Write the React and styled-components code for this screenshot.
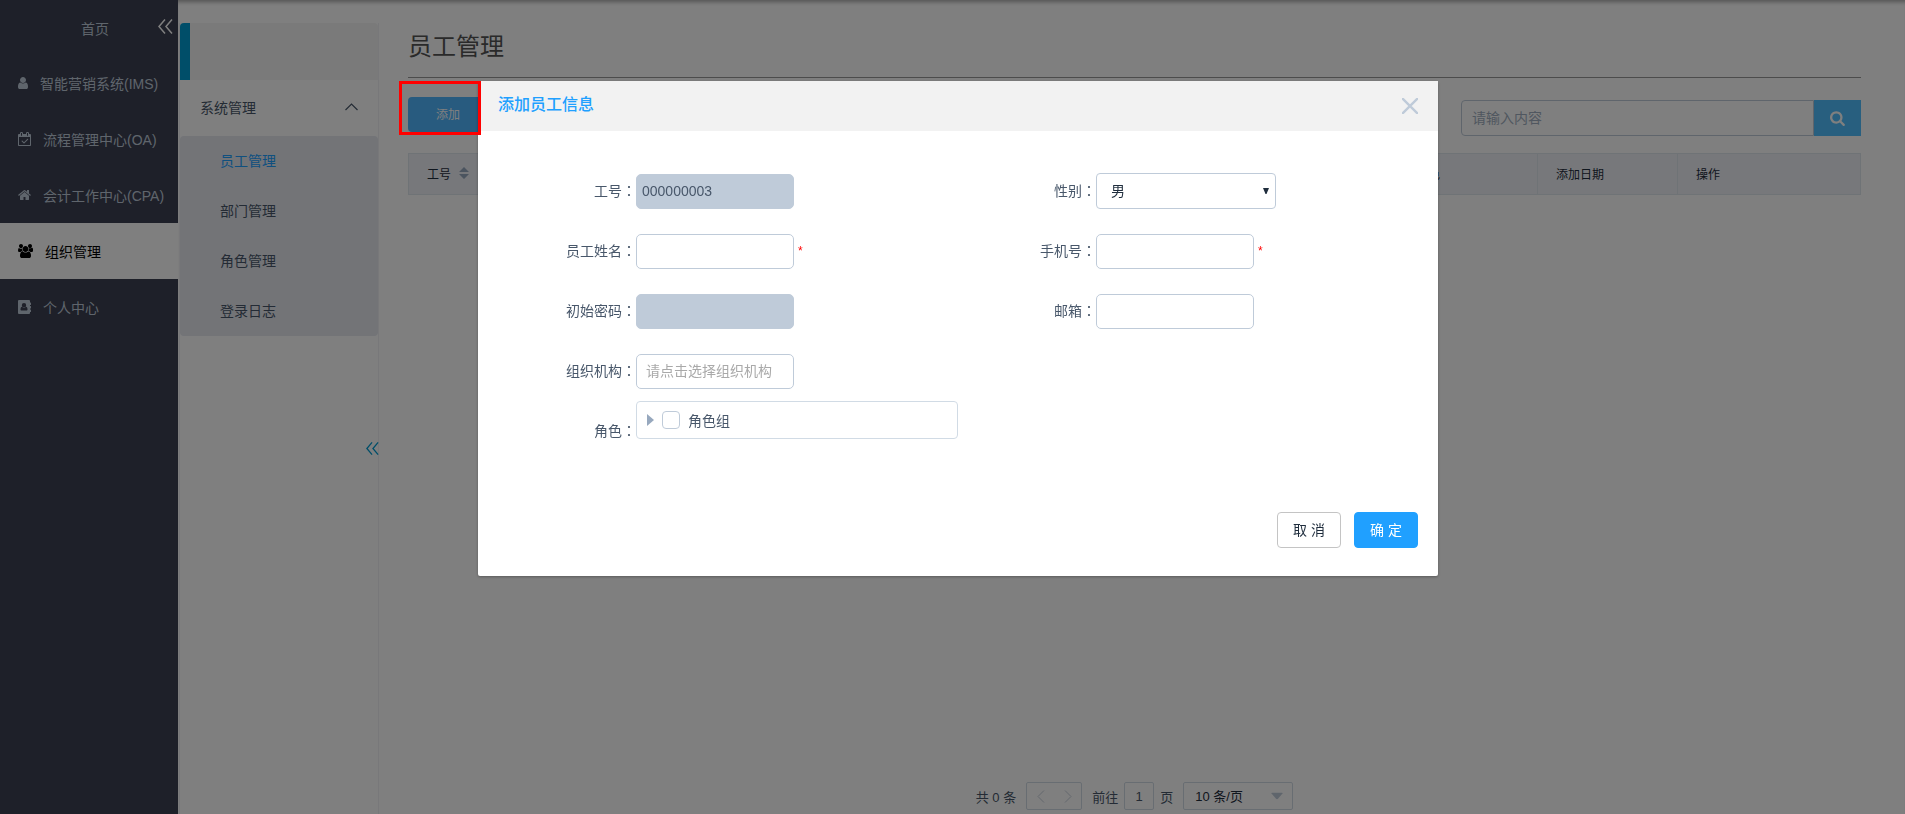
import React, { useState } from 'react';
import styled, { createGlobalStyle } from 'styled-components';


const GlobalStyle = createGlobalStyle`
    * {
        box-sizing: border-box;
    }

    body {
        margin: 0;
        background: #fff;
        color: #48576a;
        font-family: "Liberation Sans", "Noto Sans CJK SC", sans-serif;
        font-size: 14px;
    }

    button, input, select {
        font-family: inherit;
        font-size: 14px;
    }

    a {
        text-decoration: none;
        color: inherit;
    }

    ul {
        list-style: none;
        margin: 0;
        padding: 0;
    }
`

const icons = {
    user: {
        width: 10,
        box: '0 0 1280 1792',
        path: 'M1280 1399q0 109-62.5 187t-150.5 78h-854q-88 0-150.5-78t-62.5-187q0-85 8.5-160.5t31.5-152 58.5-131 94-89 134.5-34.5q131 128 313 128t313-128q76 0 134.5 34.5t94 89 58.5 131 31.5 152 8.5 160.5zm-256-887q0 159-112.5 271.5t-271.5 112.5-271.5-112.5-112.5-271.5 112.5-271.5 271.5-112.5 271.5 112.5 112.5 271.5z'
    },
    calendar: {
        width: 13,
        box: '0 0 1664 1792',
        path: 'M1303 964l-512 512q-10 9-23 9t-23-9l-288-288q-9-10-9-23t9-22l46-46q9-9 22-9t23 9l220 220 444-444q10-9 23-9t22 9l46 46q9 9 9 22t-9 23zm-1175 700h1408v-1024h-1408v1024zm384-1216v-288q0-14-9-23t-23-9h-64q-14 0-23 9t-9 23v288q0 14 9 23t23 9h64q14 0 23-9t9-23zm768 0v-288q0-14-9-23t-23-9h-64q-14 0-23 9t-9 23v288q0 14 9 23t23 9h64q14 0 23-9t9-23zm384-64v1280q0 52-38 90t-90 38h-1408q-52 0-90-38t-38-90v-1280q0-52 38-90t90-38h128v-96q0-66 47-113t113-47h64q66 0 113 47t47 113v96h384v-96q0-66 47-113t113-47h64q66 0 113 47t47 113v96h128q52 0 90 38t38 90z'
    },
    home: {
        width: 13,
        box: '64 0 1664 1792',
        path: 'M1472 992v480q0 26-19 45t-45 19h-384v-384h-256v384h-384q-26 0-45-19t-19-45v-480q0-1 .5-3t.5-3l575-474 575 474q1 2 1 6zm223-69l-62 74q-8 9-21 11h-3q-13 0-21-7l-692-577-692 577q-12 8-24 7-13-2-21-11l-62-74q-8-10-7-23.5t11-21.5l719-599q32-26 76-26t76 26l244 204v-195q0-14 9-23t23-9h192q14 0 23 9t9 23v408l219 182q10 8 11 21.5t-7 23.5z'
    },
    users: {
        width: 15,
        box: '0 0 1920 1792',
        path: 'M593 896q-162 5-265 128h-134q-82 0-138-40.5t-56-118.5q0-353 124-353 6 0 43.5 21t97.5 42.5 119 21.5q67 0 133-23-5 37-5 66 0 159 90 294zm1071 637q0 120-73 189.5t-194 69.5h-874q-121 0-194-69.5t-73-189.5q0-53 3.5-103.5t14-109 26.5-108.5 43-97.5 62-81 85.5-53.5 111.5-20q10 0 43 21.5t73 48 107 48 135 21.5 135-21.5 107-48 73-48 43-21.5q61 0 111.5 20t85.5 53.5 62 81 43 97.5 26.5 108.5 14 109 3.5 103.5zm-1024-1277q0 106-75 181t-181 75-181-75-75-181 75-181 181-75 181 75 75 181zm704 384q0 159-112.5 271.5t-271.5 112.5-271.5-112.5-112.5-271.5 112.5-271.5 271.5-112.5 271.5 112.5 112.5 271.5zm576 225q0 78-56 118.5t-138 40.5h-134q-103-123-265-128 90-135 90-294 0-29-5-66 66 23 133 23 59 0 119-21.5t97.5-42.5 43.5-21q124 0 124 353zm-128-609q0 106-75 181t-181 75-181-75-75-181 75-181 181-75 181 75 75 181z'
    },
    book: {
        width: 13,
        box: '0 0 13 14',
        path: 'M1 0h10a1 1 0 0 1 1 1v1.500h.5a.5.5 0 0 1 .5.5v1.500a.5.5 0 0 1-.5.5H12v1h.5a.5.5 0 0 1 .5.5V8a.5.5 0 0 1-.5.5H12v1h.5a.5.5 0 0 1 .5.5v1.500a.5.5 0 0 1-.5.5H12v1a1 1 0 0 1-1 1H1a1 1 0 0 1-1-1V1a1 1 0 0 1 1-1zM6 3a2.200 2.200 0 1 0 0 4.400A2.200 2.200 0 0 0 6 3zM4 6.800C3 7 2.500 8 2.500 9.500c0 .6.4 1 1 1h5c.6 0 1-.4 1-1C9.500 8 9 7 8 6.800 7.500 7.400 6.800 7.900 6 7.900S4.500 7.400 4 6.800z'
    },
    search: {
        width: 16,
        box: '64 0 1792 1792',
        path: 'M1216 832q0-185-131.500-316.500t-316.500-131.500-316.500 131.500-131.500 316.500 131.500 316.500 316.500 131.500 316.500-131.500 131.500-316.500zm512 832q0 52-38 90t-90 38q-54 0-90-38l-343-342q-179 124-399 124-143 0-273.500-55.500t-225-150-150-225-55.500-273.500 55.500-273.500 150-225 225-150 273.500-55.500 273.500 55.500 225 150 150 225 55.500 273.500q0 220-124 399l343 343q37 37 37 90z'
    }
}

const systems = [
    { name: '智能营销系统(IMS)', icon: 'user' },
    { name: '流程管理中心(OA)', icon: 'calendar' },
    { name: '会计工作中心(CPA)', icon: 'home' },
    { name: '组织管理', icon: 'users' },
    { name: '个人中心', icon: 'book' }
]

const pages = ['员工管理', '部门管理', '角色管理', '登录日志']


function Icon({ name, height = 14 }) {
    const icon = icons[name]
    return (
        <svg width={icon.width} height={height} viewBox={icon.box} fill='currentColor' fillRule='evenodd' aria-hidden='true'>
            <path d={icon.path} />
        </svg>
    )
}

function DoubleLeft({ size }) {
    return (
        <svg width={size} height={size} viewBox='0 0 15 15' fill='none' stroke='currentColor' strokeWidth='1.500' aria-hidden='true'>
            <path d='M7 .5L1 7.500l6 7M14 .5L8 7.500l6 7' />
        </svg>
    )
}

function Field({ id, label, required, children }) {
    return (
        <FormRow>
            <Label htmlFor={id}>{label}<Colon>：</Colon></Label>
            {children}
            {required && <Star>*</Star>}
        </FormRow>
    )
}


function App() {

    const [ system, setSystem ] = useState('组织管理')
    const [ page, setPage ] = useState('员工管理')
    const [ open, setOpen ] = useState(true)

    return (
        <Body>
            <GlobalStyle />
            <Sidebar>
                <SideTop>
                    <a href='#home'>首页</a>
                    <SideToggle aria-label='收起'><DoubleLeft size={15} /></SideToggle>
                </SideTop>
                {systems.map(item => (
                    <SideItem
                    key={item.name}
                    href='#system'
                    $active={item.name === system}
                    onClick={() => setSystem(item.name)}
                    >
                        <Icon name={item.icon} />
                        {item.name}
                    </SideItem>
                ))}
            </Sidebar>

            <Content>
                <Panel>
                    <PanelHead />
                    <PanelGroup>
                        系统管理
                        <svg width='13' height='8' viewBox='0 0 13 8' fill='none' stroke='currentColor' strokeWidth='1.200' aria-hidden='true'>
                            <path d='M.5 7l6-6 6 6' />
                        </svg>
                    </PanelGroup>
                    <SubMenu>
                        {pages.map(name => (
                            <li key={name}>
                                <SubLink href='#page' $active={name === page} onClick={() => setPage(name)}>{name}</SubLink>
                            </li>
                        ))}
                    </SubMenu>
                    <PanelToggle aria-label='收起菜单'><DoubleLeft size={13} /></PanelToggle>
                </Panel>

                <Main>
                    <Title>员工管理</Title>
                    <Toolbar>
                        <AddWrap>
                            <AddButton onClick={() => setOpen(true)}>添加</AddButton>
                            <Highlight />
                        </AddWrap>
                        <Search>
                            <SearchInput placeholder='请输入内容' aria-label='搜索' />
                            <SearchButton aria-label='搜索'><Icon name='search' height={16} /></SearchButton>
                        </Search>
                    </Toolbar>
                    <Table>
                        <thead>
                            <tr>
                                <Th>
                                    <Sortable>
                                        工号
                                        <svg width='10' height='12' viewBox='0 0 10 12' fill='#97a8be' aria-hidden='true'>
                                            <path d='M0 5l5-5 5 5zM0 7h10l-5 5z' />
                                        </svg>
                                    </Sortable>
                                </Th>
                                <Th $width='140px'>角色</Th>
                                <Th $width='140px'>添加日期</Th>
                                <Th $width='183px'>操作</Th>
                            </tr>
                        </thead>
                    </Table>
                    <Pagination>
                        <span>共 0 条</span>
                        <Pager>
                            <PagerButton disabled aria-label='上一页'>
                                <svg width='8' height='13' viewBox='0 0 8 13' fill='none' stroke='currentColor'><path d='M7 .5l-6 6 6 6' /></svg>
                            </PagerButton>
                            <PagerButton disabled aria-label='下一页'>
                                <svg width='8' height='13' viewBox='0 0 8 13' fill='none' stroke='currentColor'><path d='M1 .5l6 6-6 6' /></svg>
                            </PagerButton>
                        </Pager>
                        <Jump>
                            前往
                            <JumpInput defaultValue='1' aria-label='页码' />
                            页
                        </Jump>
                        <SelectWrap $width='110px'>
                            <SizeSelect aria-label='每页条数'>
                                <option>10 条/页</option>
                            </SizeSelect>
                            <Arrow $right='10px' width='12' height='7' viewBox='0 0 12 7' fill='#bfcbd9'><path d='M1 0h10q1 .4.5 1L7 6.200q-1 1-2 0L.5 1Q0 .4 1 0z' /></Arrow>
                        </SelectWrap>
                    </Pagination>
                </Main>
            </Content>

            {open && (
                <Mask>
                    <Dialog role='dialog' aria-labelledby='dialog-title'>
                        <DialogHead>
                            <DialogTitle id='dialog-title'>添加员工信息</DialogTitle>
                            <Close aria-label='关闭' onClick={() => setOpen(false)}>
                                <svg width='16' height='16' viewBox='0 0 16 16' stroke='currentColor' strokeWidth='2.400'><path d='M0 0l16 16M16 0L0 16' /></svg>
                            </Close>
                        </DialogHead>
                        <Form>
                            <Field id='number' label='工号'>
                                <Input id='number' defaultValue='000000003' disabled />
                            </Field>
                            <Field id='sex' label='性别'>
                                <SelectWrap $width='180px'>
                                    <FormSelect id='sex'>
                                        <option>男</option>
                                        <option>女</option>
                                    </FormSelect>
                                    <Arrow $right='7px' width='6' height='6' viewBox='0 0 6 6' fill='#1f2d3d'><path d='M0 0h6L3.500 6h-1z' /></Arrow>
                                </SelectWrap>
                            </Field>
                            <Field id='name' label='员工姓名' required>
                                <Input id='name' />
                            </Field>
                            <Field id='phone' label='手机号' required>
                                <Input id='phone' />
                            </Field>
                            <Field id='password' label='初始密码'>
                                <Input id='password' type='password' disabled />
                            </Field>
                            <Field id='mail' label='邮箱'>
                                <Input id='mail' />
                            </Field>
                            <Field id='org' label='组织机构'>
                                <OrgInput id='org' placeholder='请点击选择组织机构' />
                            </Field>
                            <span />
                            <Field id='role' label='角色'>
                                <Tree>
                                    <svg width='7' height='12' viewBox='0 0 7 12' fill='#97a8be' aria-hidden='true'><path d='M0 0l7 6-7 6z' /></svg>
                                    <Check id='role' type='checkbox' />
                                    <label htmlFor='role'>角色组</label>
                                </Tree>
                            </Field>
                        </Form>
                        <DialogFoot>
                            <Button onClick={() => setOpen(false)}>取 消</Button>
                            <Button $primary onClick={() => setOpen(false)}>确 定</Button>
                        </DialogFoot>
                    </Dialog>
                </Mask>
            )}
        </Body>
    );
}


const Body = styled.div`
    min-height: 100vh;
    display: flex;
`

const Sidebar = styled.nav`
    width: 178px;
    flex: none;
    background: #3c4052;
    color: #bfcbd9;
`

const SideTop = styled.div`
    height: 55px;
    padding: 0 5px 0 81px;
    display: flex;
    align-items: center;
    justify-content: space-between;
`

const IconButton = styled.button`
    border: none;
    padding: 0;
    background: none;
    display: flex;
    align-items: center;
    cursor: pointer;
`

const SideToggle = styled(IconButton)`
    padding-bottom: 2px;
    color: #fff;
`

const SideItem = styled.a`
    height: 56px;
    padding-left: 18px;
    display: flex;
    align-items: center;
    gap: 12px;
    white-space: nowrap;
    background: ${props => props.$active ? '#fff' : 'none'};

    && {
        color: ${props => props.$active ? '#000' : 'inherit'};
    }
`

const Content = styled.div`
    flex: 1;
    min-width: 0;
    padding-left: 1px;
    display: flex;
    box-shadow: inset 0 5px 4px -3px rgba(0, 0, 0, .35);
`

const Panel = styled.aside`
    position: relative;
    width: 200px;
    flex: none;
    margin-top: 23px;
    border: 1px solid #f0f0f4;
    border-width: 0 1px;
`

const PanelHead = styled.div`
    height: 57px;
    background: #f4f4f4;
    border-left: 10px solid #009cd2;
    border-radius: 4px 4px 0 0;
`

const PanelGroup = styled.div`
    height: 56px;
    padding: 0 20px 2px;
    display: flex;
    align-items: center;
    justify-content: space-between;
`

const SubMenu = styled.ul`
    background: #e6e8ef;
    border-radius: 4px;
`

const SubLink = styled.a`
    height: 50px;
    padding: 0 0 2px 40px;
    display: flex;
    align-items: center;

    && {
        color: ${props => props.$active ? '#20a0ff' : 'inherit'};
    }
`

const PanelToggle = styled(IconButton)`
    position: absolute;
    right: -1px;
    top: 419px;
    color: #009cd2;
`

const Main = styled.main`
    flex: 1;
    min-width: 0;
    padding: 0 44px 4px 29px;
    display: flex;
    flex-direction: column;
`

const Title = styled.h1`
    margin: 0;
    height: 78px;
    padding-top: 12px;
    display: flex;
    align-items: center;
    border-bottom: 1px solid #999;
    font-size: 24px;
    font-weight: 400;
    color: #555;
`

const Toolbar = styled.div`
    height: 39px;
    margin: 19px 0 17px;
    display: flex;
    justify-content: space-between;
    align-items: flex-start;
`

const AddWrap = styled.div`
    position: relative;
`

const AddButton = styled.button`
    width: 80px;
    height: 35px;
    padding: 0 0 2px;
    border: none;
    border-radius: 4px;
    background: #50b7ff;
    color: #fff;
    font-size: 12px;
`

const Highlight = styled.div`
    position: absolute;
    left: -9px;
    top: -16px;
    width: 82px;
    height: 54px;
    border: 3px solid #f00;
    z-index: 20;
    pointer-events: none;
`

const Search = styled.div`
    width: 400px;
    height: 36px;
    display: flex;
    align-self: flex-end;
`

const SearchInput = styled.input`
    flex: 1;
    min-width: 0;
    padding: 0 10px;
    border: 1px solid #bfcbd9;
    border-radius: 4px 0 0 4px;

    &::placeholder {
        color: #a0aec0;
    }
`

const SearchButton = styled.button`
    width: 47px;
    padding: 0;
    border: none;
    background: #50bfff;
    color: #fff;
    display: flex;
    align-items: center;
    justify-content: center;
`

const Table = styled.table`
    width: 100%;
    table-layout: fixed;
    border-spacing: 0;
    border: 1px solid #dfe6ec;
    border-right: none;
`

const Th = styled.th`
    width: ${props => props.$width || 'auto'};
    height: 40px;
    padding: 0 18px 2px;
    border-right: 1px solid #dfe6ec;
    background: #eef1f6;
    color: #1f2d3d;
    font-size: 12px;
    font-weight: 400;
    text-align: left;
`

const Sortable = styled.span`
    display: flex;
    align-items: center;
    gap: 8px;
`

const Pagination = styled.div`
    margin-top: auto;
    height: 28px;
    display: flex;
    align-items: center;
    justify-content: center;
    gap: 10px;
    font-size: 13px;
`

const Pager = styled.div`
    width: 56px;
    height: 28px;
    display: flex;
    border: 1px solid #d1dbe5;
    border-radius: 2px;
`

const PagerButton = styled(IconButton)`
    flex: 1;
    justify-content: center;
    color: #c6cfdb;
`

const Jump = styled.div`
    display: flex;
    align-items: center;
    gap: 6px;
`

const JumpInput = styled.input`
    width: 30px;
    height: 28px;
    padding: 0;
    border: 1px solid #d1dbe5;
    border-radius: 2px;
    color: #48576a;
    font-size: 13px;
    text-align: center;
`

const SelectWrap = styled.div`
    position: relative;
    width: ${props => props.$width};
`

const Select = styled.select`
    display: block;
    width: 100%;
    appearance: none;
    background: #fff;
    color: #1f2d3d;
`

const SizeSelect = styled(Select)`
    height: 28px;
    padding: 0 11px;
    border: 1px solid #d1dbe5;
    border-radius: 2px;
    font-size: 13px;
`

const FormSelect = styled(Select)`
    height: 36px;
    padding: 0 14px;
    border: 1px solid #bfcbd9;
    border-radius: 4px;
`

const Arrow = styled.svg`
    position: absolute;
    right: ${props => props.$right};
    top: 50%;
    transform: translateY(-50%);
    pointer-events: none;
`

const Mask = styled.div`
    position: fixed;
    inset: 0;
    z-index: 10;
    padding: 10vh 0 0 11px;
    display: flex;
    justify-content: center;
    align-items: flex-start;
    background: rgba(0, 0, 0, .5);
`

const Dialog = styled.div`
    width: 960px;
    background: #fff;
    border-radius: 2px;
    box-shadow: 0 1px 3px rgba(0, 0, 0, .3);
`

const DialogHead = styled.div`
    height: 50px;
    padding: 0 20px;
    display: flex;
    align-items: center;
    justify-content: space-between;
    background: #f2f2f2;
`

const DialogTitle = styled.h2`
    margin: 0;
    padding-bottom: 6px;
    font-size: 16px;
    font-weight: 500;
    color: #20a0ff;
`

const Close = styled(IconButton)`
    color: #bfcbd9;
`

const Form = styled.form`
    padding: 30px 20px 0;
    display: grid;
    grid-template-columns: 1fr 1fr;
    grid-auto-rows: 60px;
`

const FormRow = styled.div`
    display: flex;
    align-items: center;
`

const Label = styled.label`
    width: 138px;
    flex: none;
    padding-bottom: 2px;
    text-align: right;
`

const Colon = styled.span`
    font-family: "Noto Sans CJK TC", sans-serif;
`

const Star = styled.span`
    margin-left: 4px;
    color: #f00;
    font-size: 12px;
`

const Input = styled.input`
    width: 158px;
    height: 35px;
    padding: 0 5px;
    border: 1px solid #bfcbd9;
    border-radius: 5px;
    color: #48576a;

    &:disabled {
        background: #bfcbd9;
    }
`

const OrgInput = styled(Input)`
    padding: 0 9px;

    &::placeholder {
        color: #a9a9a9;
    }
`

const Tree = styled.div`
    flex: 1;
    align-self: flex-start;
    height: 38px;
    padding-left: 10px;
    display: flex;
    align-items: center;
    gap: 8px;
    border: 1px solid #d1dbe5;
    border-radius: 4px;
`

const Check = styled.input`
    appearance: none;
    width: 18px;
    height: 18px;
    margin: 0;
    border: 1px solid #bfcbd9;
    border-radius: 4px;
    background: #fff;
`

const DialogFoot = styled.div`
    padding: 51px 20px 28px;
    display: flex;
    justify-content: flex-end;
    gap: 13px;
`

const Button = styled.button`
    width: 64px;
    height: 36px;
    padding: 0 0 2px;
    border: 1px solid ${props => props.$primary ? '#20a0ff' : '#c4c4c4'};
    border-radius: 4px;
    background: ${props => props.$primary ? '#20a0ff' : '#fff'};
    color: ${props => props.$primary ? '#fff' : '#1f2d3d'};
`

export default App;
